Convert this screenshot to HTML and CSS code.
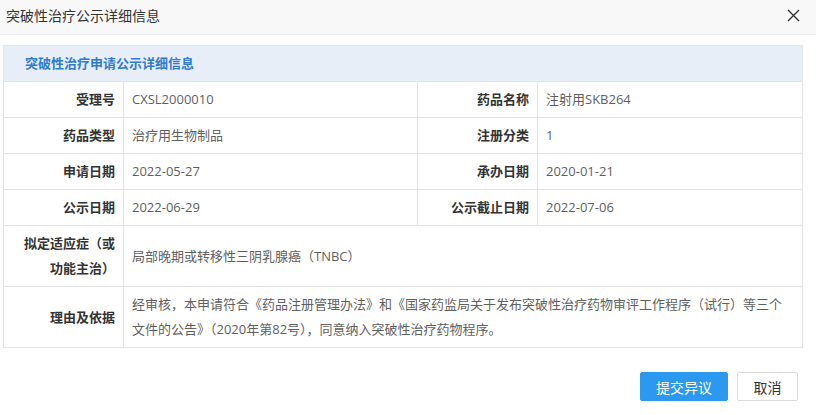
FILE: index.html
```html
<!DOCTYPE html>
<html>
<head>
  <meta charset="utf-8">
  <title>突破性治疗公示详细信息</title>
  <link rel="stylesheet" href="styles.css">
</head>
<body>
  <div class="dialog-head">
    <span class="dialog-title">突破性治疗公示详细信息</span>
    <span class="dialog-close">
      <svg width="13" height="13" viewBox="0 0 13 13"><path d="M1 1L12 12M12 1L1 12" stroke="#333" stroke-width="1.4" fill="none"/></svg>
    </span>
  </div>

  <div class="panel">
    <div class="panel-title">突破性治疗申请公示详细信息</div>
    <table class="detail">
      <colgroup>
        <col class="c-label">
        <col class="c-value">
        <col class="c-label">
        <col>
      </colgroup>
      <tr>
        <td class="label">受理号</td>
        <td class="value">CXSL2000010</td>
        <td class="label">药品名称</td>
        <td class="value">注射用SKB264</td>
      </tr>
      <tr>
        <td class="label">药品类型</td>
        <td class="value">治疗用生物制品</td>
        <td class="label">注册分类</td>
        <td class="value">1</td>
      </tr>
      <tr>
        <td class="label">申请日期</td>
        <td class="value">2022-05-27</td>
        <td class="label">承办日期</td>
        <td class="value">2020-01-21</td>
      </tr>
      <tr>
        <td class="label">公示日期</td>
        <td class="value">2022-06-29</td>
        <td class="label">公示截止日期</td>
        <td class="value">2022-07-06</td>
      </tr>
      <tr class="tall">
        <td class="label">拟定适应症（或功能主治）</td>
        <td class="value" colspan="3">局部晚期或转移性三阴乳腺癌（TNBC）</td>
      </tr>
      <tr class="tall">
        <td class="label">理由及依据</td>
        <td class="value" colspan="3">经审核，本申请符合《药品注册管理办法》和《国家药监局关于发布突破性治疗药物审评工作程序（试行）等三个文件的公告》（2020年第82号），同意纳入突破性治疗药物程序。</td>
      </tr>
    </table>
  </div>

  <div class="dialog-foot">
    <button class="btn btn-primary">提交异议</button>
    <button class="btn btn-cancel">取消</button>
  </div>
</body>
</html>
```

FILE: styles.css
```css
html, body {
  margin: 0;
  background: #fff;
  font-family: "Open Sans", "Noto Sans CJK SC", sans-serif;
  font-size: 13px;
  color: #333;
}

.dialog-head {
  display: flex;
  align-items: center;
  justify-content: space-between;
  height: 30px;
  padding: 0 16px 4px 6px;
  background: #f8f8f8;
  border-bottom: 1px solid #ececec;
}

.dialog-title {
  font-size: 14px;
  color: #333;
}

.dialog-close {
  display: flex;
}

.panel {
  margin: 10px 13px 0 3px;
}

.panel-title {
  height: 35px;
  line-height: 35px;
  padding-left: 21px;
  background: #e8eef8;
  border: 1px solid #e2e6ee;
  border-bottom: none;
  color: #2e7bcf;
  font-weight: bold;
}

.detail {
  width: 100%;
  border-collapse: collapse;
  table-layout: fixed;
}

.c-label {
  width: 120px;
}

.c-value {
  width: 294px;
}

.detail td {
  border: 1px solid #e4e4e4;
  height: 35px;
  padding: 0;
  line-height: 25px;
}

.detail .label {
  text-align: right;
  padding: 0 8px 0 14px;
  font-weight: 600;
  color: #333;
}

.detail .value {
  padding: 0 12px 0 8px;
  color: #5f5f5f;
}

.detail .tall td {
  padding-top: 5px;
  padding-bottom: 5px;
}

.dialog-foot {
  display: flex;
  justify-content: flex-end;
  gap: 9px;
  margin-top: 24px;
  padding-right: 18px;
}

.btn {
  height: 29px;
  padding: 0;
  font-family: inherit;
  font-size: 14px;
  color: #333;
  background: #fff;
  border: 1px solid #dcdcdc;
  border-radius: 2px;
}

.btn-primary {
  width: 88px;
  color: #fff;
  background: #2b99f0;
  border-color: #2b99f0;
}

.btn-cancel {
  width: 61px;
}
```
